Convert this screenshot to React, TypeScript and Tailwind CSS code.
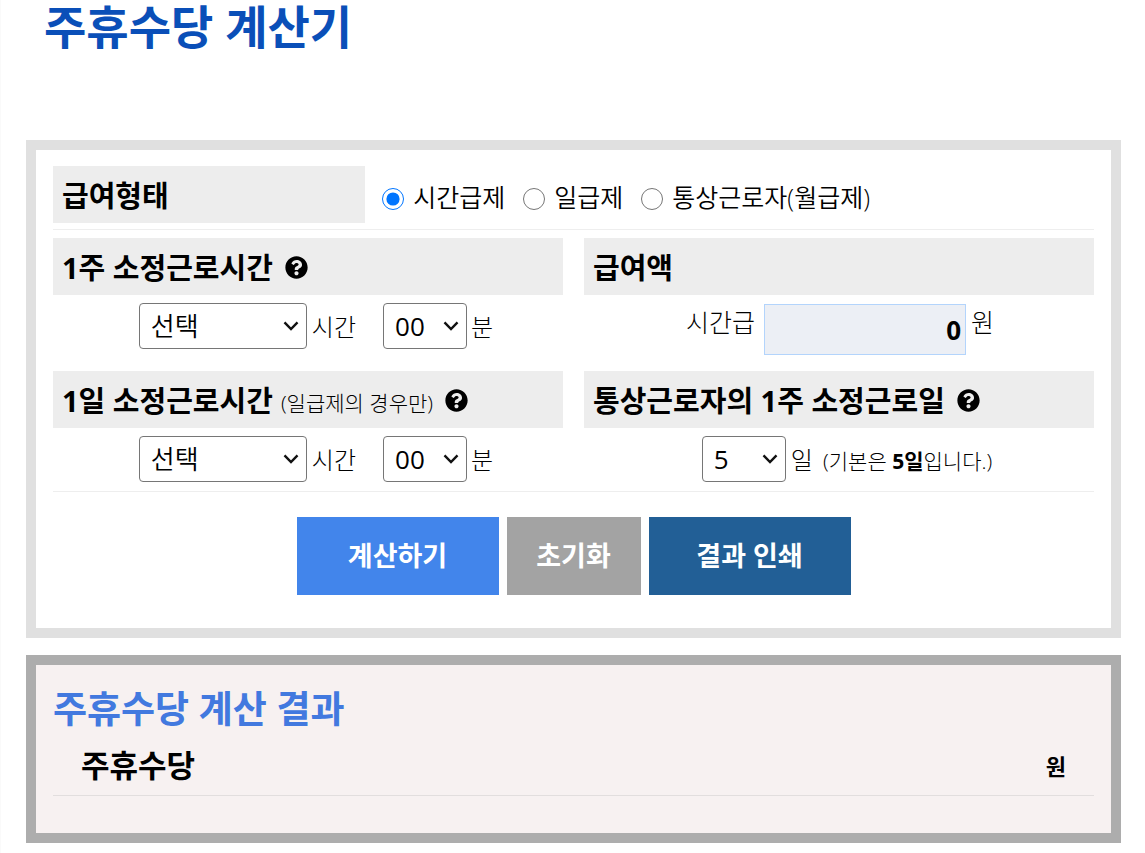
import { useState } from 'react';
import type { ReactNode } from 'react';
import { FaQuestionCircle } from 'react-icons/fa';

const PAY_TYPES = ['시간급제', '일급제', '통상근로자(월급제)'];

const HOURS = Array.from({ length: 40 }, (_, i) => String(i + 1));
const MINUTES = ['00', '10', '20', '30', '40', '50'];
const DAYS = ['1', '2', '3', '4', '5', '6', '7'];

function HelpButton({ label }: { label: string }) {
  return (
    <button type="button" aria-label={label} className="ml-3 shrink-0">
      <FaQuestionCircle className="size-[23px]" />
    </button>
  );
}

function FieldTitle({ children }: { children: ReactNode }) {
  return (
    <h2 className="flex h-[57px] items-center bg-[#ededed] px-[9px] pt-[2px] text-[29px] leading-10 font-bold whitespace-nowrap">
      {children}
    </h2>
  );
}

interface SelectBoxProps {
  id: string;
  label?: string;
  options: string[];
  value: string;
  onChange: (value: string) => void;
  wide?: boolean;
}

function SelectBox({ id, label, options, value, onChange, wide }: SelectBoxProps) {
  return (
    <span className={wide ? 'relative w-[168px] font-[350]' : 'relative w-[84px] font-normal'}>
      <select
        id={id}
        aria-label={label}
        value={value}
        onChange={(e) => onChange(e.target.value)}
        className="h-[46px] w-full appearance-none rounded-[4px] border border-[#767676] bg-white pr-6 pl-[11px] text-[26px] leading-10"
      >
        {wide && <option value="">선택</option>}
        {options.map((option) => (
          <option key={option} value={option}>
            {option}
          </option>
        ))}
      </select>
      <svg
        viewBox="0 0 16 10"
        className="pointer-events-none absolute top-[18px] right-2 h-[10px] w-4"
        fill="none"
        stroke="#111"
        strokeWidth="2.4"
      >
        <path d="M1.5 1.3 8 8l6.5-6.7" />
      </svg>
    </span>
  );
}

function WorkTime({ id, title }: { id: string; title: string }) {
  const [hour, setHour] = useState('');
  const [minute, setMinute] = useState('00');

  return (
    <div className="flex items-center justify-center pt-2 pl-4 text-[24px] leading-9 font-light">
      <SelectBox id={`${id}-hour`} label={`${title} 시간`} options={HOURS} value={hour} onChange={setHour} wide />
      <label htmlFor={`${id}-hour`} className="mr-[27px] ml-[5px] pt-[2px]">
        시간
      </label>
      <SelectBox id={`${id}-min`} label={`${title} 분`} options={MINUTES} value={minute} onChange={setMinute} />
      <label htmlFor={`${id}-min`} className="ml-1 pt-[2px]">
        분
      </label>
    </div>
  );
}

export default function App() {
  const [payType, setPayType] = useState(PAY_TYPES[0]);
  const [pay, setPay] = useState('0');
  const [days, setDays] = useState('5');

  return (
    <main className="border-l border-[#fafafa] bg-white pr-6 pb-[10px] pl-[25px] font-['Open_Sans','Noto_Sans_CJK_KR',sans-serif] text-black">
      <h1 className="pl-[18px] text-[46px] leading-[52px] font-bold text-[#0a4fb8]">주휴수당 계산기</h1>

      <form
        className="mt-[88px] border-[10px] border-[#e0e0e0] px-[17px] pt-4 pb-[33px]"
        onSubmit={(e) => e.preventDefault()}
      >
        <div className="flex border-b border-[#eee] pb-[6px]">
          <div className="w-[30%]">
            <FieldTitle>급여형태</FieldTitle>
          </div>
          <div className="flex items-center gap-[18px] pt-1 pl-[17px] text-[25px] leading-9 font-[350]">
            {PAY_TYPES.map((type) => (
              <label key={type} className="flex items-center gap-[9px] whitespace-nowrap">
                <input
                  type="radio"
                  name="payType"
                  checked={payType === type}
                  onChange={() => setPayType(type)}
                  className="mt-1 size-[22px] accent-[#0075ff]"
                />
                {type}
              </label>
            ))}
          </div>
        </div>

        <div className="grid grid-cols-2 gap-x-[21px] border-b border-[#eee] pt-2 pb-[9px]">
          <section className="pb-[22px]">
            <FieldTitle>
              1주 소정근로시간
              <HelpButton label="1주 소정근로시간 도움말" />
            </FieldTitle>
            <WorkTime id="week" title="1주 소정근로" />
          </section>

          <section>
            <FieldTitle>급여액</FieldTitle>
            <div className="flex items-start justify-center pt-[9px] pl-[2px] text-[25px] leading-9 font-light">
              <label htmlFor="pay">시간급</label>
              <input
                id="pay"
                type="text"
                value={pay}
                onChange={(e) => setPay(e.target.value)}
                className="mr-[5px] ml-[9px] h-[51px] w-[202px] border border-[#b3d4fc] bg-[#eceff5] px-1 text-right text-[26px] font-bold"
              />
              <span>원</span>
            </div>
          </section>

          <section>
            <FieldTitle>
              1일 소정근로시간
              <small className="ml-2 pt-1 text-[21px] font-light">(일급제의 경우만)</small>
              <HelpButton label="1일 소정근로시간 도움말" />
            </FieldTitle>
            <WorkTime id="day" title="1일 소정근로" />
          </section>

          <section>
            <FieldTitle>
              통상근로자의 1주 소정근로일
              <HelpButton label="소정근로일 도움말" />
            </FieldTitle>
            <div className="flex items-center justify-center pt-2 pl-4 text-[24px] leading-9 font-light">
              <SelectBox id="days" options={DAYS} value={days} onChange={setDays} />
              <label htmlFor="days" className="ml-[5px] pt-[2px]">
                일 <small className="ml-1 text-[21px]">(기본은 <b className="font-bold">5일</b>입니다.)</small>
              </label>
            </div>
          </section>
        </div>

        <div className="flex justify-center gap-2 pt-[25px] text-[27px] leading-10 font-bold text-white">
          <button type="submit" className="h-[78px] w-[202px] bg-[#4285eb]">
            계산하기
          </button>
          <button type="reset" className="h-[78px] w-[134px] bg-[#a3a3a3]">
            초기화
          </button>
          <button type="button" className="h-[78px] w-[202px] bg-[#225f96]" onClick={() => window.print()}>
            결과 인쇄
          </button>
        </div>
      </form>

      <section className="mt-[17px] border-[10px] border-[#adadad] bg-[#f7f1f1] px-[17px] pt-[18px] pb-[37px]">
        <h2 className="text-[37px] leading-[52px] font-bold text-[#4279df]">주휴수당 계산 결과</h2>
        <div className="flex items-center justify-between border-b border-[#e2dede] pr-7 pl-7 font-bold">
          <h3 className="text-[31px] leading-[60px]">주휴수당</h3>
          <span className="pt-[2px] text-[22px] leading-8">원</span>
        </div>
      </section>
    </main>
  );
}
